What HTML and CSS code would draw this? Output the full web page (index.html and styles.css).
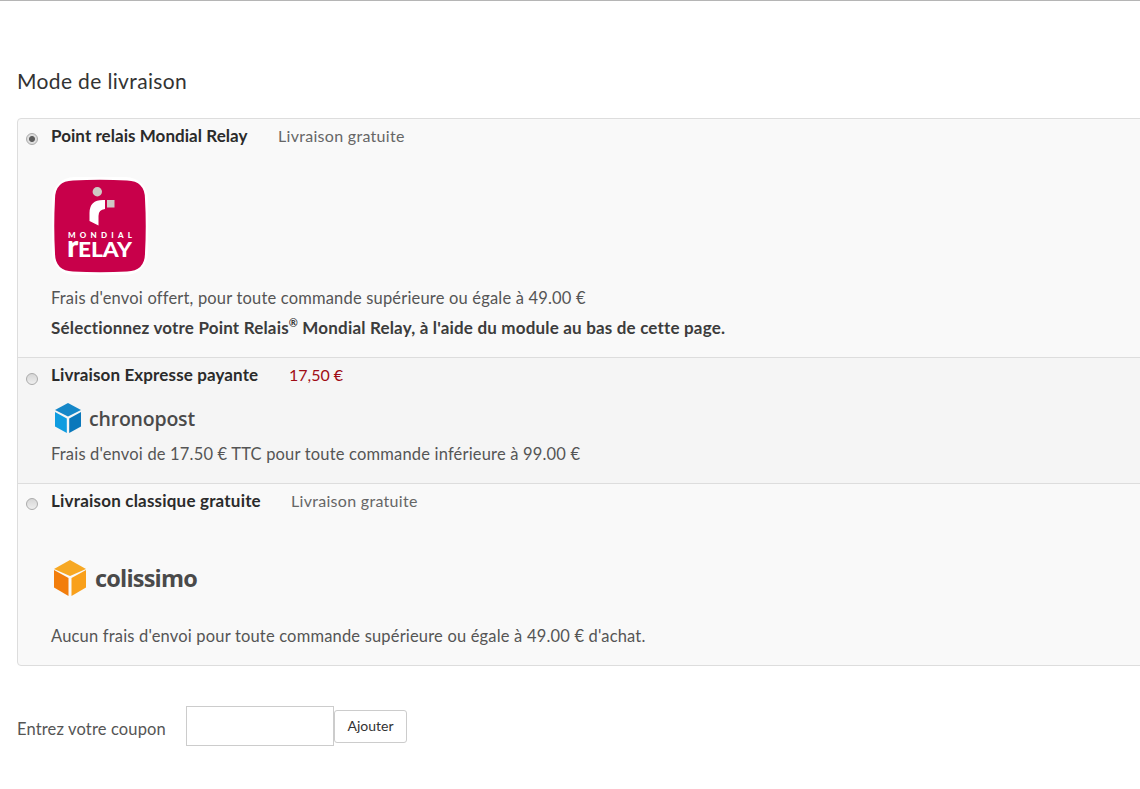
FILE: index.html
```html
<!DOCTYPE html>
<html lang="fr">
<head>
<meta charset="utf-8">
<title>Mode de livraison</title>
<link rel="stylesheet" href="styles.css">
</head>
<body>
<main class="page">
  <h2 class="title">Mode de livraison</h2>
  <div class="panel">
    <section class="row row-relay">
      <div class="head">
        <span class="radio checked"></span>
        <strong class="name w1">Point relais Mondial Relay</strong>
        <span class="price">Livraison gratuite</span>
      </div>
      <div class="logo logo-relay">
        <svg width="96" height="98" viewBox="0 0 96 98">
          <rect x="0" y="0" width="96" height="98" rx="22" fill="#fff"/>
          <path d="M3 22Q3 4 21 3.5Q48 2 75 3.5Q93 4 93 22Q94.5 49 93 76Q93 94 75 94.5Q48 96 21 94.5Q3 94 3 76Q1.5 49 3 22Z" fill="#c8004a"/>
          <circle cx="45.3" cy="14.7" r="4.7" fill="#cfc9c4"/>
          <path d="M37.5 36Q37.5 23 51 23H53V32Q46.5 32.5 46.5 39V48.5L37.5 44Z" fill="#fff"/>
          <rect x="55" y="23" width="7.5" height="7.5" fill="#cfc9c4"/>
          <text x="16" y="61" class="mr-small" textLength="64" lengthAdjust="spacing">MONDIAL</text>
          <text x="15" y="79.7" class="mr-r">r</text>
          <text x="26" y="79.7" class="mr-big" textLength="54" lengthAdjust="spacingAndGlyphs">ELAY</text>
        </svg>
      </div>
      <p class="desc">Frais d'envoi offert, pour toute commande supérieure ou égale à 49.00 €</p>
      <p class="desc bold">Sélectionnez votre Point Relais<sup>®</sup> Mondial Relay, à l'aide du module au bas de cette page.</p>
    </section>
    <section class="row row-chrono">
      <div class="head">
        <span class="radio"></span>
        <strong class="name w2">Livraison Expresse payante</strong>
        <span class="price red">17,50 €</span>
      </div>
      <div class="logo logo-chrono">
        <svg width="28" height="32" viewBox="0 0 28 32">
          <path d="M14 1L27 8L14 14.5L1 8Z" fill="#1587c8"/>
          <path d="M1 10L12.8 16.5V31L1 24.5Z" fill="#0f9ce0"/>
          <path d="M27 10L15.2 16.5V31L27 24.5Z" fill="#0b78bb"/>
        </svg>
        <span class="brand chrono">chronopost</span>
      </div>
      <p class="desc">Frais d'envoi de 17.50 € TTC pour toute commande inférieure à 99.00 €</p>
    </section>
    <section class="row row-colis">
      <div class="head">
        <span class="radio"></span>
        <strong class="name w3">Livraison classique gratuite</strong>
        <span class="price">Livraison gratuite</span>
      </div>
      <div class="logo logo-colis">
        <svg width="34" height="38" viewBox="0 0 34 38">
          <path d="M17 1L33 10L17 17L1 10Z" fill="#f7a823"/>
          <path d="M1 11L15.5 19V37L1 28.5Z" fill="#f27d0c"/>
          <path d="M33 11L18.5 19V37L33 28.5Z" fill="#f9a01b"/>
        </svg>
        <span class="brand colis">colissimo</span>
      </div>
      <p class="desc">Aucun frais d'envoi pour toute commande supérieure ou égale à 49.00 € d'achat.</p>
    </section>
  </div>
  <form class="coupon">
    <label class="coupon-label" for="coupon">Entrez votre coupon</label>
    <input class="coupon-input" id="coupon" type="text">
    <button class="coupon-btn" type="button">Ajouter</button>
  </form>
</main>
</body>
</html>
```
FILE: styles.css
```css
* { box-sizing: border-box; }
html, body { margin: 0; height: 100%; overflow: hidden; }
body {
  background: #fff;
  border-top: 1px solid #b5b5b5;
  font-family: "Lato", "Liberation Sans", sans-serif;
  font-size: 16px;
  color: #555;
}
.page { padding: 66px 0 0 17px; }
.title {
  margin: 0 0 24px;
  height: 27px;
  font-size: 21px;
  line-height: 27px;
  font-weight: 400;
  color: #333;
  letter-spacing: 0.36px;
}
.panel {
  width: 1140px;
  background: #f9f9f9;
  border: 1px solid #ddd;
  border-radius: 4px;
}
.row { padding: 0 0 0 33px; }
.row-relay { height: 238px; }
.row-chrono { height: 126px; background: #f5f5f5; border-top: 1px solid #ddd; }
.row-colis { height: 182px; border-top: 1px solid #ddd; }
.head {
  position: relative;
  display: flex;
  height: 32px;
  align-items: center;
}
.radio {
  position: absolute;
  left: -25px;
  top: 14px;
  width: 12px;
  height: 12px;
  border-radius: 50%;
  border: 1px solid #ababab;
  background: linear-gradient(#d6d6d6, #eeeeee);
}
.row-chrono .radio { top: 15px; }
.radio.checked {
  background: radial-gradient(circle, #5c5c5c 0 2.5px, #dedede 3.5px);
}
.name {
  font-weight: 700;
  color: #2b2b2b;
  font-size: 17px;
  letter-spacing: 0.05px;
}
.w1 { width: 227px; }
.w2 { width: 238px; letter-spacing: 0.12px; }
.w3 { width: 240px; letter-spacing: 0.2px; }
.price { color: #666; font-size: 16px; letter-spacing: 0.3px; }
.red { color: #a00c14; letter-spacing: 0; }
.logo { display: flex; align-items: center; }
.logo-relay { height: 98px; margin: 26px 0 0 1px; }
.logo-chrono { height: 32px; margin: 12px 0 0 3px; gap: 7px; }
.logo-colis { height: 38px; margin: 43px 0 0 2px; gap: 8px; }
.mr-small { font: 900 8px "Lato", sans-serif; fill: #fff; }
.mr-r { font: 900 30px "Lato", sans-serif; fill: #fff; }
.mr-big { font: 900 21px "Lato", sans-serif; fill: #fff; }
.brand { font-family: "Open Sans", sans-serif; font-weight: 600; color: #4a4a4a; }
.chrono { font-size: 19.5px; letter-spacing: -0.2px; }
.colis { font-size: 23.5px; letter-spacing: -0.8px; font-weight: 700; }
.desc { margin: 0; font-size: 16.5px; line-height: 30px; color: #555; letter-spacing: 0.18px; }
.row-relay .desc:first-of-type { margin-top: 8px; }
.row-chrono .desc { margin-top: 5px; }
.row-colis .desc { margin-top: 24px; }
.desc.bold { font-size: 17px; font-weight: 700; color: #3c3c3c; letter-spacing: 0.18px; }
sup { font-size: 11px; line-height: 0; }
.coupon { display: flex; align-items: center; margin-top: 40px; height: 40px; }
.coupon-label { width: 169px; padding-top: 6px; color: #555; font-size: 16.5px; letter-spacing: 0.15px; }
.coupon-input { width: 148px; height: 40px; border: 1px solid #ccc; background: #fff; }
.coupon-btn {
  align-self: flex-start;
  width: 73px;
  height: 33px;
  margin-top: 4px;
  padding: 0 0 2px;
  border: 1px solid #ccc;
  border-radius: 3px;
  background: #fff;
  color: #333;
  font: 14px "Lato", sans-serif;
}
```
